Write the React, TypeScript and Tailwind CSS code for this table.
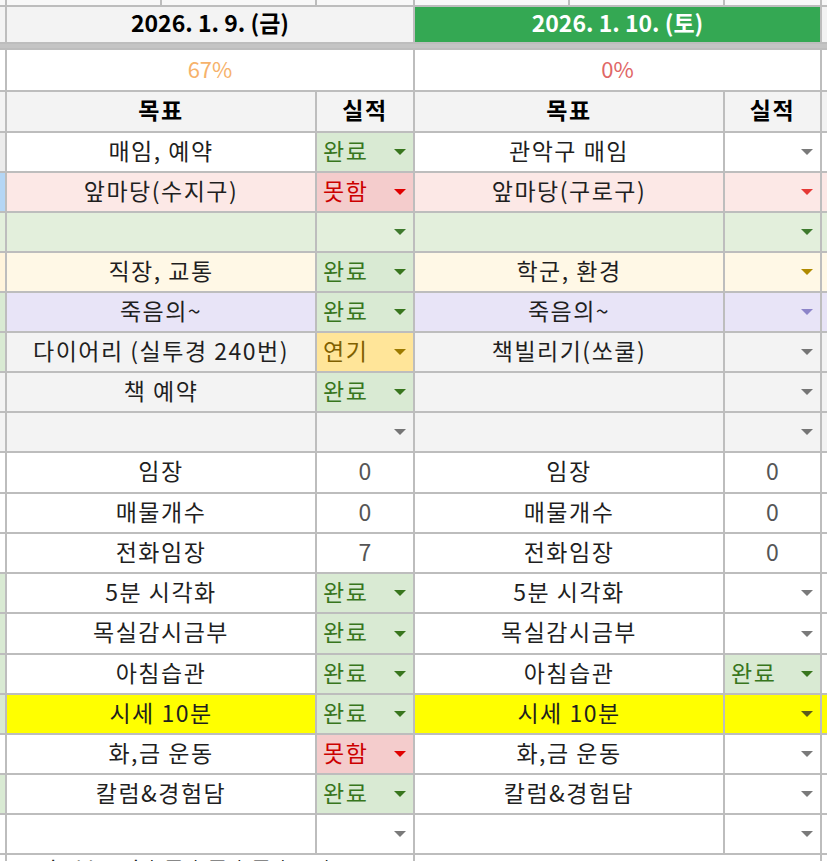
import React from 'react';

type Tone = 'white' | 'pink' | 'green' | 'cream' | 'lavender' | 'gray' | 'yellow';

const toneBg: Record<Tone, string> = {
  white: 'bg-white',
  pink: 'bg-[#fce8e6]',
  green: 'bg-[#e3efdc]',
  cream: 'bg-[#fff8e6]',
  lavender: 'bg-[#e8e4f7]',
  gray: 'bg-[#f3f3f3]',
  yellow: 'bg-[#ffff00]',
};

const toneArrow: Record<Tone, string> = {
  white: '#7a7a7a',
  pink: '#e53935',
  green: '#3f7a2e',
  cream: '#b08a00',
  lavender: '#8c84c9',
  gray: '#757575',
  yellow: '#5b5b1e',
};

const statusStyle: Record<string, { bg: string; text: string; arrow: string }> = {
  완료: { bg: 'bg-[#d9ead3]', text: 'text-[#38761d]', arrow: '#38761d' },
  못함: { bg: 'bg-[#f4cccc]', text: 'text-[#cc0000]', arrow: '#e00000' },
  연기: { bg: 'bg-[#ffe599]', text: 'text-[#7f6000]', arrow: '#9c7a00' },
};

// [tone, 목표(좌), 실적(좌), 목표(우), 실적(우), 왼쪽 끝 색, 높이]
type RowDef = [Tone, string, string, string, string, string, string];

const rows: RowDef[] = [
  ['white', '매임, 예약', '완료', '관악구 매임', '', 'bg-[#ececec]', 'h-[38px]'],
  ['pink', '앞마당(수지구)', '못함', '앞마당(구로구)', '', 'bg-[#b4d6f5]', 'h-[38px]'],
  ['green', '', '', '', '', 'bg-[#e3efdc]', 'h-[38px]'],
  ['cream', '직장, 교통', '완료', '학군, 환경', '', 'bg-[#fff4dc]', 'h-[38px]'],
  ['lavender', '죽음의~', '완료', '죽음의~', '', 'bg-[#d9ead3]', 'h-[38px]'],
  ['gray', '다이어리 (실투경 240번)', '연기', '책빌리기(쏘쿨)', '', 'bg-[#d9ead3]', 'h-[38px]'],
  ['gray', '책 예약', '완료', '', '', 'bg-[#f3f3f3]', 'h-[38px]'],
  ['gray', '', '', '', '', 'bg-[#f3f3f3]', 'h-[38px]'],
  ['white', '임장', '0', '임장', '0', 'bg-white', 'h-[39px]'],
  ['white', '매물개수', '0', '매물개수', '0', 'bg-white', 'h-[38px]'],
  ['white', '전화임장', '7', '전화임장', '0', 'bg-white', 'h-[38px]'],
  ['white', '5분 시각화', '완료', '5분 시각화', '', 'bg-[#d9ead3]', 'h-[38px]'],
  ['white', '목실감시금부', '완료', '목실감시금부', '', 'bg-[#d9ead3]', 'h-[39px]'],
  ['white', '아침습관', '완료', '아침습관', '완료', 'bg-[#d9ead3]', 'h-[38px]'],
  ['yellow', '시세 10분', '완료', '시세 10분', '', 'bg-[#d9ead3]', 'h-[38px]'],
  ['white', '화,금 운동', '못함', '화,금 운동', '', 'bg-white', 'h-[38px]'],
  ['white', '칼럼&경험담', '완료', '칼럼&경험담', '', 'bg-[#d9ead3]', 'h-[38px]'],
  ['white', '', '', '', '', 'bg-white', 'h-[38px]'],
];

const Arrow = ({ color }: { color: string }) => (
  <svg width="12" height="6" viewBox="0 0 12 6" className="shrink-0">
    <path d="M0 0H12L6 6Z" fill={color} />
  </svg>
);

const Result = ({ value, tone }: { value: string; tone: Tone }) => {
  if (/^\d+$/.test(value)) {
    return (
      <div className={`${toneBg[tone]} flex items-center justify-center pb-[4px] text-[#555] tracking-normal`}>{value}</div>
    );
  }
  const s = statusStyle[value];
  if (s) {
    return (
      <div className={`${s.bg} flex items-center justify-between pl-[6px] pr-[7px]`}>
        <span className={`${s.text} pb-[4px]`}>{value}</span>
        <Arrow color={s.arrow} />
      </div>
    );
  }
  return (
    <div className={`${toneBg[tone]} flex items-center justify-end pr-[7px]`}>
      <Arrow color={toneArrow[tone]} />
    </div>
  );
};

const GRID = 'grid grid-cols-[5px_308px_96px_308px_95px_5px] gap-x-[2px]';
const CENTER = 'flex items-center justify-center pb-[4px] whitespace-nowrap';

export default function App() {
  return (
    <div className="w-[827px] h-[861px] overflow-hidden bg-[#bdbdbd] font-['Noto_Sans_CJK_KR',sans-serif] text-[23px] tracking-[1.5px] leading-none text-[#1f1f1f] flex flex-col gap-y-[2px]">
      {/* 윗줄 잘린 행 */}
      <div className="grid grid-cols-[5px_153px_153px_96px_153px_153px_95px_5px] gap-x-[2px] h-[5px] shrink-0">
        {Array.from({ length: 8 }).map((_, i) => (
          <div key={i} className="bg-[#f8f8f8]" />
        ))}
      </div>

      {/* 날짜 */}
      <div className="grid grid-cols-[5px_406px_405px_5px] gap-x-[2px] h-[35px] shrink-0 tracking-normal">
        <div className="bg-[#f3f3f3]" />
        <div className={`bg-[#f3f3f3] ${CENTER} font-bold text-black`}>2026. 1. 9. (금)</div>
        <div className={`bg-[#34a853] ${CENTER} font-bold text-white`}>2026. 1. 10. (토)</div>
        <div className="bg-[#f3f3f3]" />
      </div>

      {/* 고정선 */}
      <div className="h-[4px] shrink-0 bg-[#c4c4c4]" />

      {/* 달성률 */}
      <div className="grid grid-cols-[5px_406px_405px_5px] gap-x-[2px] h-[40px] shrink-0 text-[22px] tracking-normal">
        <div className="bg-white" />
        <div className={`bg-white ${CENTER} text-[#f6b26b]`}>67%</div>
        <div className={`bg-white ${CENTER} text-[#e06666]`}>0%</div>
        <div className="bg-white" />
      </div>

      {/* 헤더 */}
      <div className={`${GRID} h-[39px] shrink-0 font-bold text-black`}>
        <div className="bg-[#f3f3f3]" />
        <div className={`bg-[#f3f3f3] ${CENTER}`}>목표</div>
        <div className={`bg-[#f3f3f3] ${CENTER}`}>실적</div>
        <div className={`bg-[#f3f3f3] ${CENTER}`}>목표</div>
        <div className={`bg-[#f3f3f3] ${CENTER}`}>실적</div>
        <div className="bg-[#f3f3f3]" />
      </div>

      {rows.map(([tone, lGoal, lRes, rGoal, rRes, edge, h], i) => (
        <div key={i} className={`${GRID} ${h} shrink-0`}>
          <div className={edge} />
          <div className={`${toneBg[tone]} ${CENTER}`}>{lGoal}</div>
          <Result value={lRes} tone={tone} />
          <div className={`${toneBg[tone]} ${CENTER}`}>{rGoal}</div>
          <Result value={rRes} tone={tone} />
          <div className={toneBg[tone]} />
        </div>
      ))}

      {/* 아래 잘린 행 */}
      <div className="grid grid-cols-[5px_406px_405px_5px] gap-x-[2px] h-[12px] shrink-0">
        <div className="bg-white" />
        <div className="bg-white overflow-hidden pl-[30px] pt-[3px] whitespace-nowrap">나: 부동산 | 물 | 통 | 통 | 쓰 |</div>
        <div className="bg-white" />
        <div className="bg-white" />
      </div>
    </div>
  );
}
